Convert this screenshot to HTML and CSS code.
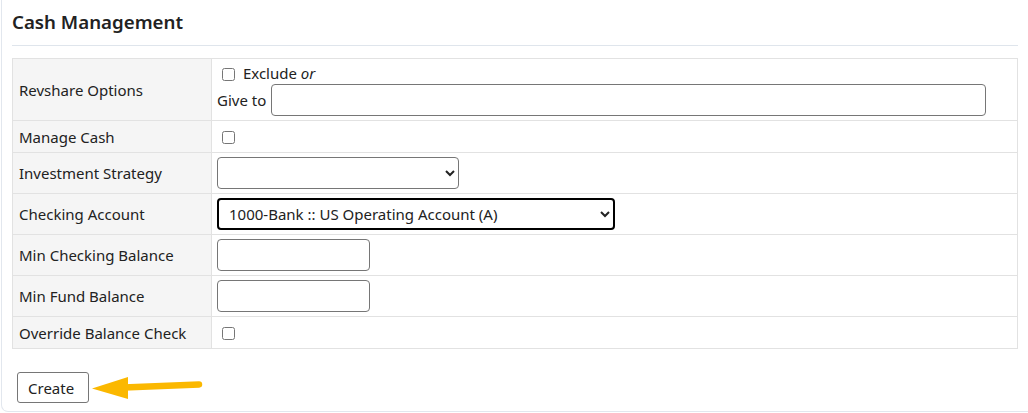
FILE: index.html
```html
<!DOCTYPE html>
<html lang="en">

<head>
    <meta charset="UTF-8">
    <title>Cash Management</title>
    <link rel="stylesheet" href="styles.css">
</head>

<body>
    <div class="panel">
        <h2 class="panel-title">Cash Management</h2>
        <form>
            <table class="form-table">
                <tr>
                    <th>Revshare Options</th>
                    <td>
                        <label class="line"><input type="checkbox"> Exclude <em>or</em></label>
                        <label class="give">Give to <input type="text" class="wide"></label>
                    </td>
                </tr>
                <tr class="check-row">
                    <th>Manage Cash</th>
                    <td><input type="checkbox"></td>
                </tr>
                <tr>
                    <th>Investment Strategy</th>
                    <td><select class="strategy"><option></option></select></td>
                </tr>
                <tr>
                    <th>Checking Account</th>
                    <td><select class="account focused"><option>1000-Bank :: US Operating Account (A)</option></select></td>
                </tr>
                <tr>
                    <th>Min Checking Balance</th>
                    <td><input type="text" class="small"></td>
                </tr>
                <tr>
                    <th>Min Fund Balance</th>
                    <td><input type="text" class="small"></td>
                </tr>
                <tr class="check-row">
                    <th>Override Balance Check</th>
                    <td><input type="checkbox"></td>
                </tr>
            </table>
            <div class="actions">
                <button type="button">Create</button>
                <svg class="pointer" width="115" height="30" viewBox="0 0 115 30">
                    <line x1="36" y1="14.5" x2="111" y2="11.5" stroke="#fbb800" stroke-width="6.5" stroke-linecap="round" />
                    <polygon points="4,15.5 40,4 40,26" fill="#fbb800" />
                </svg>
            </div>
        </form>
    </div>
</body></html>
```

FILE: styles.css
```css
* {
    box-sizing: border-box;
}

body {
    margin: 0;
    font-family: "Noto Sans", "Open Sans", sans-serif;
    font-size: 15px;
    color: #222;
    background: #fff;
}

.panel {
    margin-left: 1px;
    width: 1050px;
    border: 1px solid #e2e7ee;
    border-top: none;
    border-radius: 0 0 7px 7px;
    padding: 0 10px 8px 10px;
}

.panel-title {
    margin: 0;
    padding: 8px 0 9px;
    font-size: 18.7px;
    font-weight: 600;
    line-height: 28px;
    color: #222;
    border-bottom: 1px solid #dfe5ec;
    width: 1006px;
}

.form-table {
    margin-top: 12px;
    width: 1006px;
    border-collapse: collapse;
}

.form-table th,
.form-table td {
    border: 1px solid #e2e2e2;
    padding: 4px 5px;
    text-align: left;
    vertical-align: middle;
}

.form-table th {
    width: 199px;
    padding-left: 6px;
    background: #f5f5f5;
    font-weight: normal;
}

.form-table td {
    height: 40px;
}

.form-table .check-row td {
    height: 32px;
}

input[type="checkbox"] {
    margin: 3px 4px 3px 5px;
    vertical-align: -2px;
}

.line {
    display: block;
    line-height: 21px;
}

.give {
    display: flex;
    align-items: center;
    gap: 5px;
}

input[type="text"],
select {
    height: 32px;
    font-family: inherit;
    font-size: 15px;
    border: 1px solid #767676;
    border-radius: 4px;
    background: #fff;
    color: #222;
}

.wide {
    width: 715px;
}

.small {
    width: 153px;
}

.strategy {
    width: 242px;
}

.account {
    width: 398px;
    padding-left: 6px;
}

.focused {
    border: 2px solid #000;
}

.actions {
    display: flex;
    align-items: center;
    margin-top: 23px;
    padding-left: 5px;
}

button {
    width: 72px;
    height: 31px;
    padding: 0 0 0 10px;
    text-align: left;
    font-family: inherit;
    font-size: 15px;
    color: #222;
    background: #fff;
    border: 1px solid #767676;
    border-radius: 3px;
}

.pointer {
    margin-left: -1px;
    margin-top: 1px;
}
```
